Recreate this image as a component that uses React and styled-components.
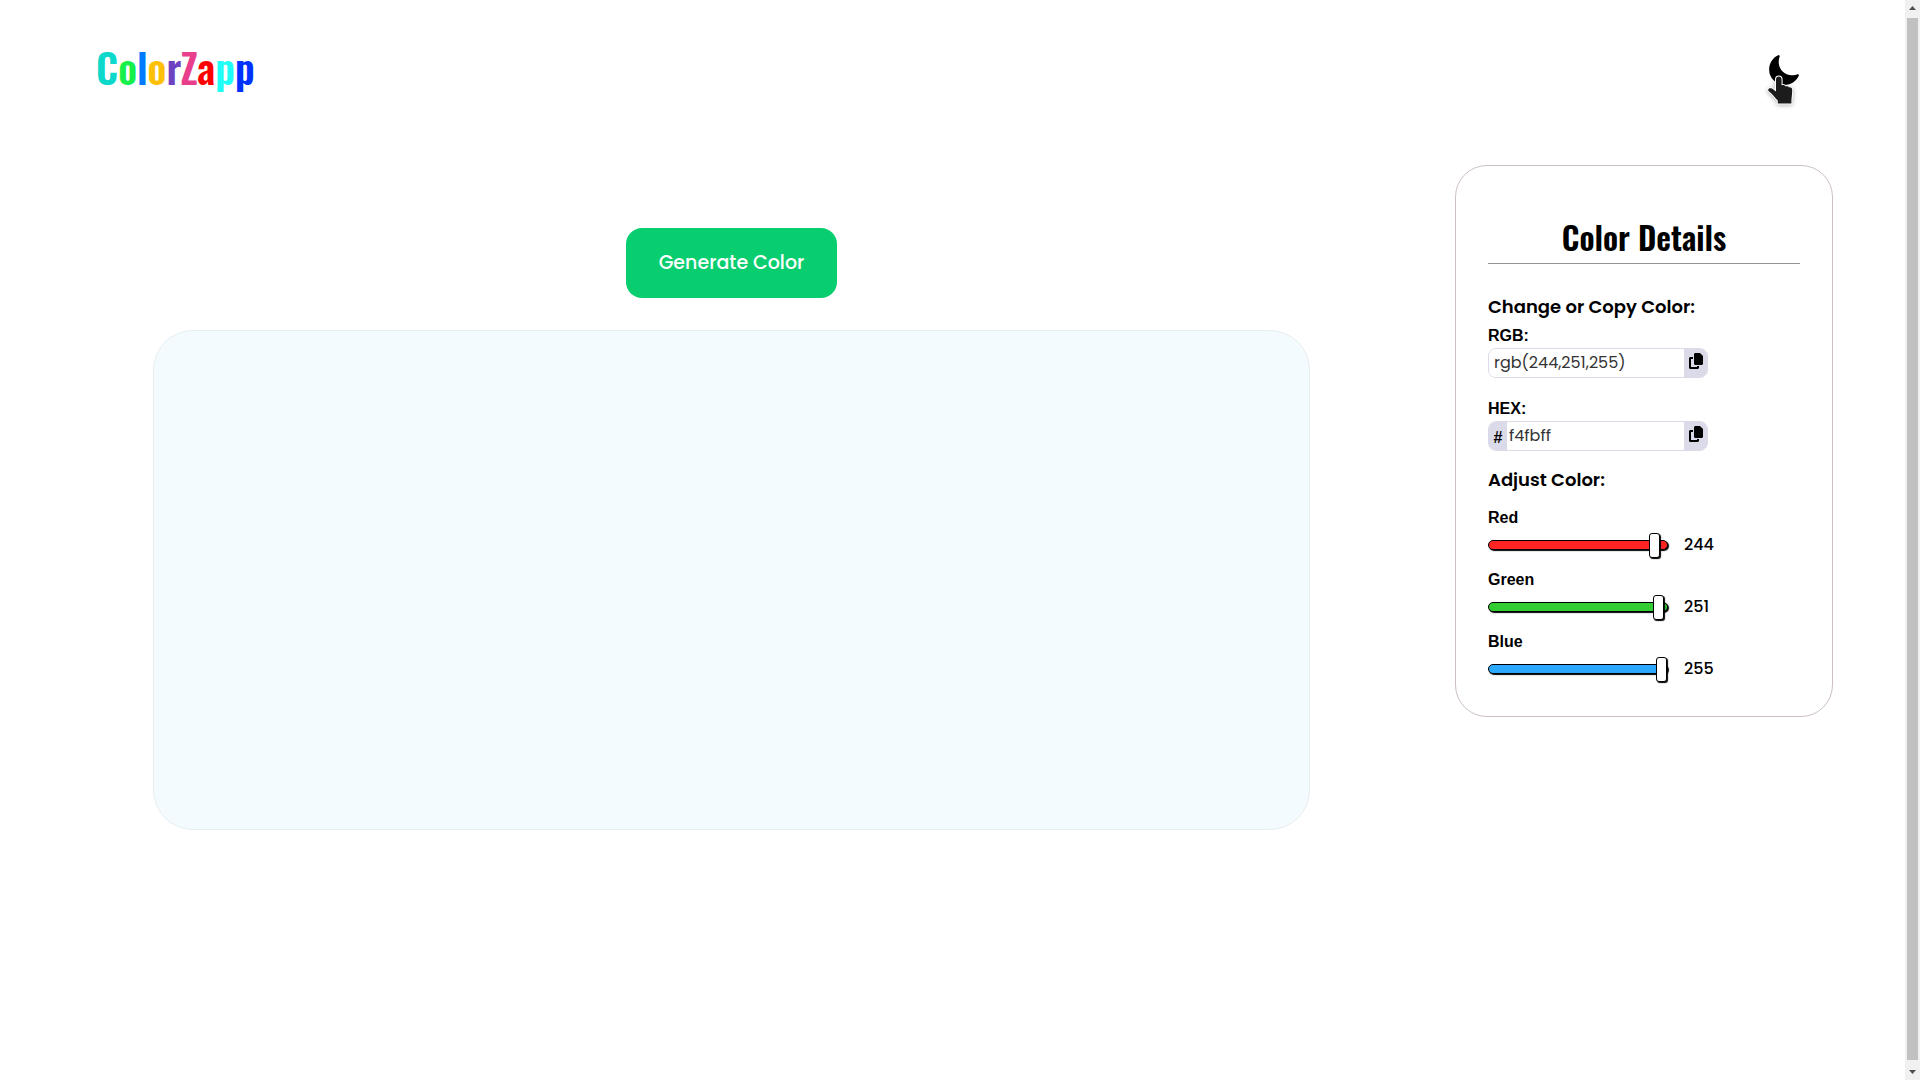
import { useState } from 'react';
import styled, { createGlobalStyle } from 'styled-components';
import { IoMoon } from 'react-icons/io5';
import { FaCopy } from 'react-icons/fa6';

const letters = [
  ['C', '#0dd8cc'],
  ['o', '#17f04a'],
  ['l', '#007bff'],
  ['o', '#ffc107'],
  ['r', '#6f42c1'],
  ['Z', '#e83e8c'],
  ['a', '#ff0000'],
  ['p', '#20fff7'],
  ['p', '#0032ff'],
];

const channels = [
  { name: 'Red', track: '#ff2424' },
  { name: 'Green', track: '#32cd32' },
  { name: 'Blue', track: '#2ba8ff' },
];

const toHex = rgb => rgb.map(n => n.toString(16).padStart(2, '0')).join('');

const App = () => {
  const [rgb, setRgb] = useState([244, 251, 255]);
  const rgbText = `rgb(${rgb.join(',')})`;
  const hexText = toHex(rgb);

  const generate = () => setRgb(rgb.map(() => Math.floor(Math.random() * 256)));

  const change = (index, value) =>
    setRgb(rgb.map((n, i) => (i === index ? Number(value) : n)));

  const changeHex = e => {
    const value = e.target.value;
    if (/^[0-9a-f]{6}$/i.test(value)) {
      setRgb([0, 2, 4].map(i => parseInt(value.slice(i, i + 2), 16)));
    }
  };

  const changeRgb = e => {
    const parts = e.target.value.match(/\d+/g);
    if (parts && parts.length === 3) {
      setRgb(parts.map(n => Math.min(255, Number(n))));
    }
  };

  const copy = text => navigator.clipboard && navigator.clipboard.writeText(text);

  return (
    <Window>
      <GlobalStyle />
      <Page>
        <Header>
          <Logo href={`#`}>
            {letters.map(([char, color], i) => (
              <Letter key={i} $color={color}>{char}</Letter>
            ))}
          </Logo>
          <ThemeButton type={`button`} aria-label={`Dark mode`}>
            <IoMoon size={34} />
            <Pointer viewBox="0 0 32 34" aria-hidden="true">
              <path d="M11 4.5C11 2.6 12.2 1.5 13.8 1.5S16.6 2.6 16.6 4.5V10.2C18.3 9.9 19.8 10.2 20.4 11.3C22 10.9 23.6 11.2 24.2 12.4C26 12.2 27.2 13 27.2 15C27.2 19 26.7 22 26.4 25V28.4H12.8V25.6C10.2 23.2 8.8 20.4 6.4 18.4C4.8 17 3.3 16.4 3.2 15C3.1 13.4 5.4 12.8 7.4 13.8L11 16.4Z" />
            </Pointer>
          </ThemeButton>
        </Header>

        <Main>
          <Preview>
            <Generate type={`button`} onClick={generate}>Generate Color</Generate>
            <ColorBox $color={rgbText} />
          </Preview>

          <Card>
            <Title>Color Details</Title>
            <Subtitle>Change or Copy Color:</Subtitle>
            <Fields>
              <div>
                <Label htmlFor={`rgb`}>RGB:</Label>
                <InputRow>
                  <Input id={`rgb`} type={`text`} value={rgbText} onChange={changeRgb} />
                  <CopyButton type={`button`} aria-label={`Copy RGB`} onClick={() => copy(rgbText)}>
                    <FaCopy size={16} />
                  </CopyButton>
                </InputRow>
              </div>
              <div>
                <Label htmlFor={`hex`}>HEX:</Label>
                <InputRow>
                  <Hash>#</Hash>
                  <Input id={`hex`} type={`text`} value={hexText} onChange={changeHex} $tight />
                  <CopyButton type={`button`} aria-label={`Copy HEX`} onClick={() => copy(`#${hexText}`)}>
                    <FaCopy size={16} />
                  </CopyButton>
                </InputRow>
              </div>
            </Fields>
            <Subtitle>Adjust Color:</Subtitle>
            <Sliders>
              {channels.map(({ name, track }, i) => (
                <div key={name}>
                  <Label htmlFor={name}>{name}</Label>
                  <SliderRow>
                    <Slider
                      id={name}
                      type={`range`}
                      min={`0`}
                      max={`255`}
                      value={rgb[i]}
                      $track={track}
                      onChange={e => change(i, e.target.value)}
                    />
                    <Value htmlFor={name}>{rgb[i]}</Value>
                  </SliderRow>
                </div>
              ))}
            </Sliders>
          </Card>
        </Main>
      </Page>

      <Scrollbar aria-hidden="true">
        <Arrow viewBox="0 0 15 18"><path d="M4 10h7L7.5 6z" /></Arrow>
        <Thumb />
        <Arrow viewBox="0 0 15 18"><path d="M4 10h7L7.5 14z" /></Arrow>
      </Scrollbar>
    </Window>
  );
};

const GlobalStyle = createGlobalStyle`
  *, *::before, *::after {
    box-sizing: border-box;
  }
  body {
    margin: 0;
    background: #fff;
    color: #000;
    font-family: Poppins, Inter, sans-serif;
  }
  button {
    border: 0;
    padding: 0;
    cursor: pointer;
    font-family: inherit;
    color: inherit;
  }
`;

const Window = styled.div`
  display: flex;
  min-height: 100vh;
`;

const Page = styled.div`
  flex: 1;
  min-width: 0;
`;

const Header = styled.header`
  display: flex;
  justify-content: space-between;
  align-items: center;
  height: 140px;
  padding: 0 104px 0 96px;
`;

const Logo = styled.a`
  padding-bottom: 6px;
  font-family: Oswald, 'Liberation Sans Narrow', sans-serif;
  font-size: 40px;
  line-height: 60px;
  font-weight: 600;
  text-decoration: none;
`;

const Letter = styled.span`
  color: ${props => props.$color};
`;

const ThemeButton = styled.button`
  position: relative;
  display: flex;
  background: none;
`;

const Pointer = styled.svg`
  position: absolute;
  top: 22px;
  left: -2px;
  width: 32px;
  height: 34px;
  fill: #1c1c1c;
  stroke: #fff;
  stroke-width: 2;
  paint-order: stroke;
  filter: drop-shadow(0 1px 2px rgba(0, 0, 0, 0.3));
`;

const Main = styled.main`
  display: flex;
  align-items: flex-start;
  gap: 145px;
  padding: 25px 72px 0 153px;
`;

const Preview = styled.section`
  flex: 1;
  display: flex;
  flex-direction: column;
  align-items: center;
  gap: 32px;
  padding-top: 63px;
`;

const Generate = styled.button`
  padding: 21px 33px;
  border-radius: 16px;
  background: #09ce70;
  color: #fff;
  font-size: 19px;
  line-height: 28px;
  font-weight: 500;
`;

const ColorBox = styled.div`
  width: 100%;
  height: 500px;
  border: 1px solid #e6eef0;
  border-radius: 40px;
  background: ${props => props.$color};
`;

const Card = styled.aside`
  width: 378px;
  padding: 47px 32px 32px;
  border: 1px solid #cbc0c6;
  border-radius: 32px;
`;

const Title = styled.h2`
  margin: 0 0 28px;
  padding-bottom: 2px;
  border-bottom: 1px solid #8f9591;
  font-family: Oswald, 'Liberation Sans Narrow', sans-serif;
  font-size: 32px;
  line-height: 48px;
  font-weight: 600;
  text-align: center;
`;

const Subtitle = styled.h3`
  margin: 0;
  font-size: 18px;
  line-height: 30px;
  font-weight: 600;
`;

const Fields = styled.div`
  display: grid;
  gap: 19px;
  padding: 2px 0 14px;
`;

const Label = styled.label`
  display: block;
  font-family: 'Liberation Sans', Arial, sans-serif;
  font-size: 16px;
  line-height: 24px;
  font-weight: 700;
`;

const InputRow = styled.div`
  display: flex;
  width: 220px;
  height: 30px;
  border: 1px solid #dadae8;
  border-radius: 8px;
  overflow: hidden;
`;

const Input = styled.input`
  flex: 1;
  min-width: 0;
  border: 0;
  outline: 0;
  padding: 0 ${props => (props.$tight ? '2px' : '5px')} 2px;
  background: #fff;
  color: #333;
  font-family: Poppins, Inter, sans-serif;
  font-size: 16px;
`;

const Hash = styled.span`
  width: 18px;
  background: #dadae8;
  font-family: 'Liberation Sans', Arial, sans-serif;
  font-size: 16px;
  line-height: 32px;
  font-weight: 700;
  text-align: center;
`;

const CopyButton = styled.button`
  display: flex;
  justify-content: center;
  align-items: center;
  width: 23px;
  padding-bottom: 4px;
  background: #dadae8;
`;

const Sliders = styled.div`
  display: grid;
  gap: 8px;
  padding-top: 11px;
`;

const SliderRow = styled.div`
  display: flex;
  align-items: center;
  gap: 16px;
  height: 30px;
`;

const Slider = styled.input`
  appearance: none;
  width: 180px;
  height: 26px;
  margin: 0;
  background: transparent;
  cursor: pointer;
  &::-webkit-slider-runnable-track {
    height: 10px;
    border: 1px solid #000;
    border-radius: 25px;
    background: ${props => props.$track};
    box-shadow: 1px 1px 1px #000;
  }
  &::-webkit-slider-thumb {
    appearance: none;
    width: 11px;
    height: 25px;
    margin-top: -8px;
    border: 1px solid #000;
    border-radius: 3px;
    background: #fff;
    box-shadow: 1px 1px 1px #000;
  }
`;

const Value = styled.output`
  font-size: 16px;
  line-height: 24px;
  font-weight: 500;
`;

const Scrollbar = styled.div`
  position: sticky;
  top: 0;
  display: flex;
  flex-direction: column;
  width: 15px;
  height: 100vh;
  padding: 0 2px 2px;
  background: #f1f1f1;
`;

const Arrow = styled.svg`
  width: 15px;
  height: 18px;
  margin: 0 -2px;
  fill: #505050;
`;

const Thumb = styled.div`
  flex: 1;
  background: #c1c1c1;
`;

export default App;
